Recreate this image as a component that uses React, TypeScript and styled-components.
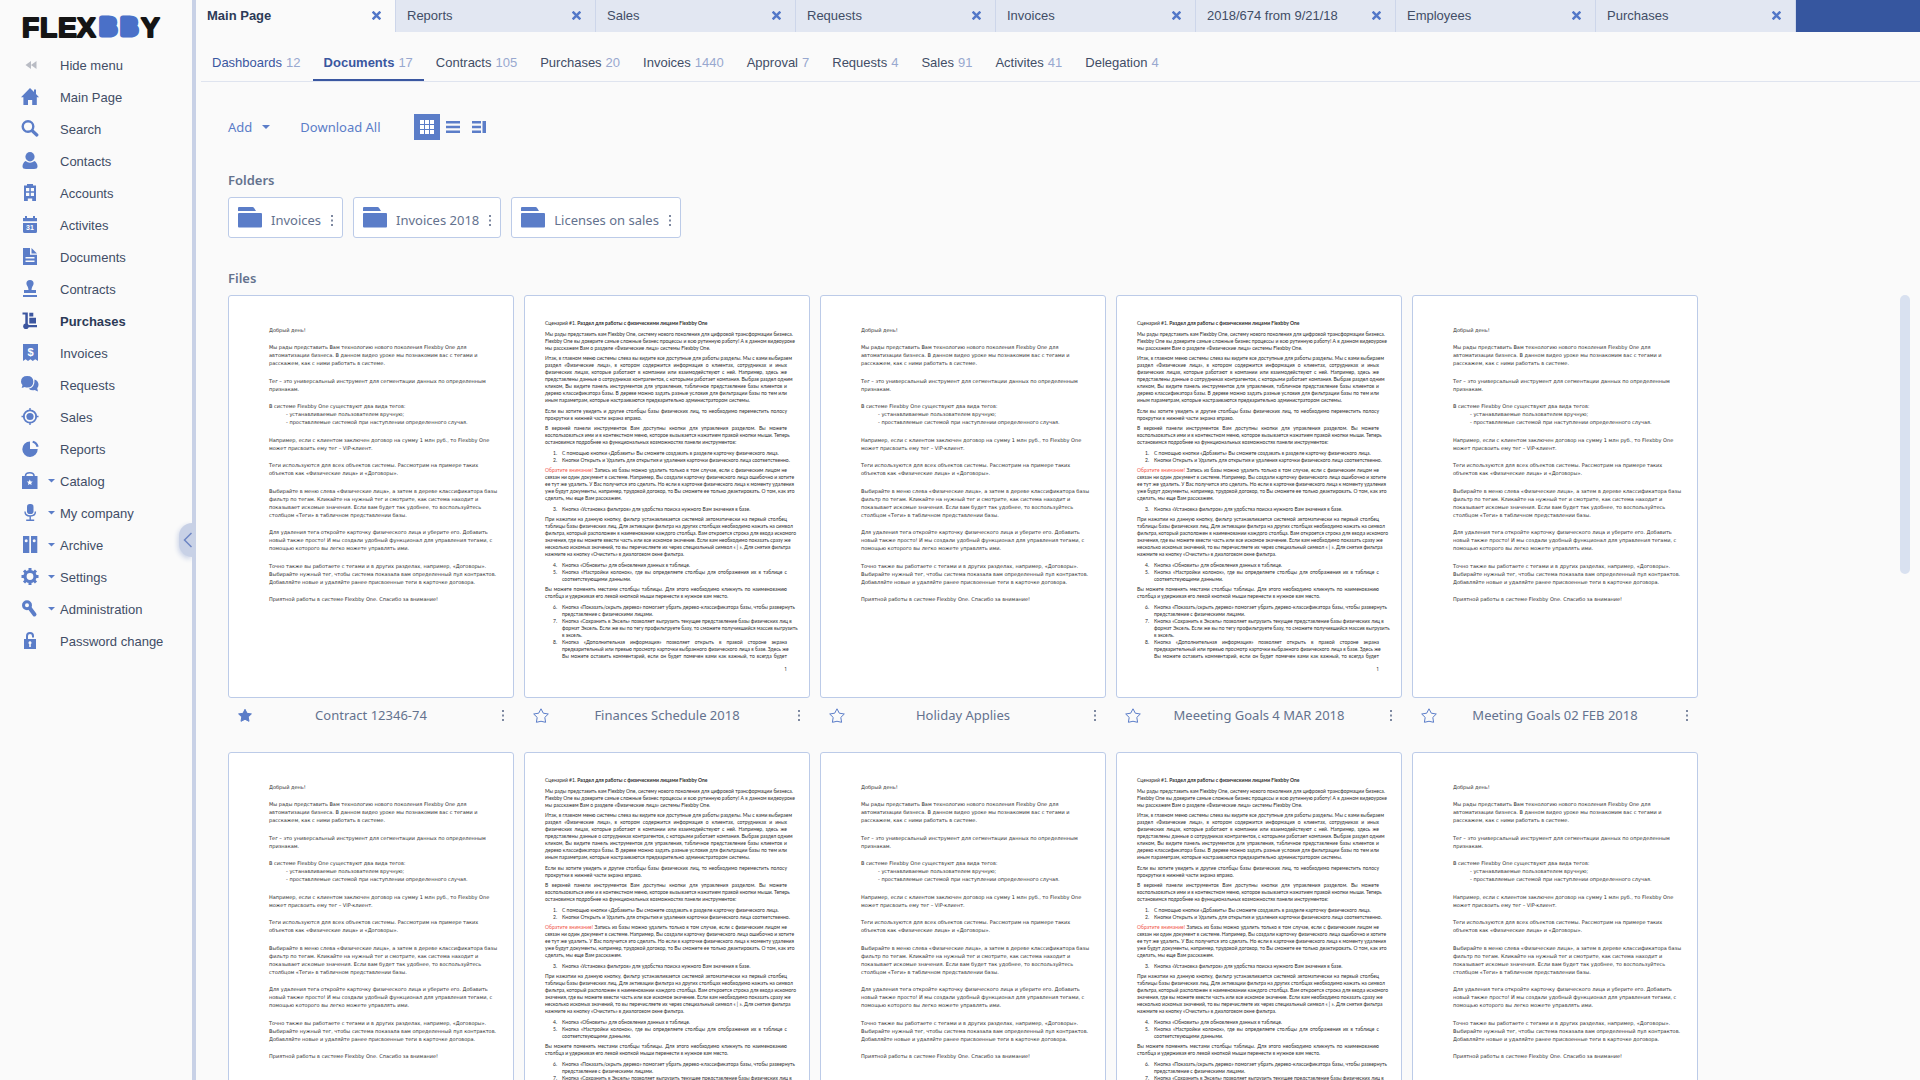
import React from "react";
import styled, { createGlobalStyle, css } from "styled-components";

const ui = `"Liberation Sans", Arial, sans-serif`;
const humanist = `"Noto Sans", "Open Sans", sans-serif`;
const blue = "#5b7dc8";

const GlobalStyle = createGlobalStyle`
  *, *::before, *::after { box-sizing: border-box; }
  body { margin: 0; background: #fafafa; font-family: ${ui}; font-size: 13px; color: #414d66; overflow: hidden; }
  button { border: 0; padding: 0; background: none; font: inherit; color: inherit; cursor: pointer; }
  a { color: inherit; text-decoration: none; }
  ul { list-style: none; margin: 0; padding: 0; }
  svg { display: block; flex: none; }
`;

const Shell = styled.div`
  display: flex;
  height: 100vh;
  overflow: hidden;
`;

const Sidebar = styled.aside`
  position: relative;
  flex: none;
  width: 196px;
  border-right: 4px solid #c8d1e6;
`;

const Logo = styled.a`
  display: block;
  height: 49px;
  padding: 10px 0 0 18px;
`;

const NavLink = styled.a<{ $active?: boolean }>`
  display: grid;
  grid-template-columns: 18px 16px 1fr;
  align-items: center;
  height: 32px;
  padding-left: 21px;
  color: #414d66;
  font-weight: ${(p) => (p.$active ? 700 : 400)};
  ${(p) => p.$active && css`color: #2c3a57;`}
`;

const NavText = styled.span`
  padding-left: 5px;
`;

const CaretCell = styled.span`
  display: flex;
  justify-content: flex-end;
`;

const Collapse = styled.button`
  position: absolute;
  right: 0;
  top: 523px;
  width: 13px;
  height: 34px;
  border-radius: 17px 0 0 17px;
  background: #c8d1e6;
  box-shadow: -1px 2px 5px #c8d1e6;
  display: flex;
  align-items: center;
  justify-content: flex-end;
`;

const Main = styled.main`
  flex: 1;
  min-width: 0;
  display: flex;
  flex-direction: column;
`;

const TabBar = styled.ul`
  display: flex;
  flex: none;
  height: 32px;
  background: #36569f;
`;

const Tab = styled.li<{ $active?: boolean }>`
  display: flex;
  align-items: center;
  justify-content: space-between;
  width: 200px;
  padding: 0 14px 1px 11px;
  border-right: 1px solid #cdd6ea;
  background: ${(p) => (p.$active ? "#fafafa" : "#e2e7f2")};
  color: ${(p) => (p.$active ? "#2c3a57" : "#414d66")};
  font-weight: ${(p) => (p.$active ? 700 : 400)};
`;

const SubNav = styled.ul`
  display: flex;
  flex: none;
  gap: 1px;
  height: 50px;
  margin-left: 5px;
  border-bottom: 1px solid #dfe4ef;
`;

const SubLink = styled.a<{ $tone?: "visited" | "active" }>`
  display: flex;
  align-items: center;
  gap: 4px;
  height: 49px;
  padding: 13px 11px 0;
  border-bottom: 2px solid ${(p) => (p.$tone === "active" ? "#3a57a0" : "transparent")};
  color: ${(p) => (p.$tone ? "#3a57a0" : "#414d66")};
  font-weight: ${(p) => (p.$tone === "active" ? 700 : 400)};
`;

const Count = styled.span`
  color: #98a8cf;
  font-weight: 400;
`;

const Content = styled.div`
  flex: 1;
  min-height: 0;
  overflow: hidden;
  padding: 32px 10px 0 32px;
  font-family: ${humanist};
  color: #64728e;
`;

const Toolbar = styled.div`
  display: flex;
  align-items: center;
  height: 26px;
  color: ${blue};
`;

const AddButton = styled.button`
  display: flex;
  align-items: center;
  gap: 10px;
  margin-right: 30px;
`;

const Views = styled.div`
  display: flex;
  margin-left: 33px;
`;

const ViewButton = styled.button<{ $active?: boolean }>`
  display: flex;
  align-items: center;
  justify-content: center;
  width: 26px;
  height: 26px;
  color: ${(p) => (p.$active ? "#fff" : blue)};
  background: ${(p) => (p.$active ? blue : "transparent")};
`;

const Section = styled.section`
  margin-top: 31px;
`;

const Heading = styled.h2`
  margin: 0 0 8px;
  font-size: 13px;
  line-height: 18px;
  font-weight: 600;
`;

const Folders = styled.ul`
  display: flex;
  gap: 10px;
`;

const Folder = styled.li`
  display: flex;
  align-items: center;
  height: 41px;
  padding: 0 8px 0 9px;
  border: 1px solid #bccbe8;
  border-radius: 3px;
  background: #fff;
`;

const FolderName = styled.a`
  padding: 5px 9px 0 9px;
`;

const MoreButton = styled.button<{ $low?: boolean }>`
  display: flex;
  justify-content: flex-end;
  color: #7d88a0;
  padding-top: ${(p) => (p.$low ? 5 : 0)}px;
`;

const FilesRow = styled.div`
  display: flex;
  align-items: flex-start;
`;

const FileGrid = styled.ul`
  flex: 1;
  display: grid;
  grid-template-columns: repeat(auto-fill, 286px);
  gap: 19px 10px;
`;

const Thumb = styled.span`
  width: 10px;
  height: 279px;
  border-radius: 5px;
  background: #d9e1f0;
`;

const Sheet = styled.div`
  height: 403px;
  border: 1px solid #bccbe8;
  border-radius: 3px;
  background: #fff;
  overflow: hidden;
  color: #2c2c2c;
  font-size: 5px;
`;

const LetterBody = styled.div`
  display: flex;
  flex-direction: column;
  justify-content: space-between;
  height: 307px;
  padding: 30px 10px 0 40px;
  font-family: "DejaVu Sans", sans-serif;
  line-height: 8px;
`;

const ManualBody = styled.div`
  display: flex;
  flex-direction: column;
  justify-content: space-between;
  height: 364px;
  padding: 24px 22px 0 20px;
  font-family: Lato, "Liberation Sans", sans-serif;
  line-height: 7px;
`;

const Paragraph = styled.div<{ $indent?: number }>`
  padding-left: ${(p) => p.$indent || 0}px;
`;

const Line = styled.div<{ $justify?: boolean }>`
  position: relative;
  white-space: nowrap;
  text-align-last: ${(p) => (p.$justify ? "justify" : "left")};
`;

const Num = styled.span`
  position: absolute;
  left: -9px;
`;

const Alert = styled.span`
  color: #f0564a;
`;

const PageNo = styled.div`
  padding: 6px 22px 0 0;
  text-align: right;
  line-height: 7px;
`;

const Caption = styled.div`
  display: grid;
  grid-template-columns: 16px 1fr 16px;
  align-items: center;
  height: 35px;
  padding: 0 9px 1px;
`;

const FileName = styled.span`
  text-align: center;
`;

const Caret = ({ size = 7 }: { size?: number }) => (
  <svg width={size} height={size / 2} viewBox="0 0 8 4" preserveAspectRatio="none" fill={blue}><path d="M0 0h8L4 4z" /></svg>
);

const Dots = () => (
  <svg width="4" height="11" viewBox="0 0 4 11" fill="currentColor">
    <path d="M1 0h2v2H1zM1 4.5h2v2H1zM1 9h2v2H1z" />
  </svg>
);

const Cross = () => (
  <svg width="9" height="9" viewBox="0 0 8 8" stroke="#5277c8" strokeWidth="2.2"><path d="M.6.6l6.8 6.8M7.4.6L.6 7.4" /></svg>
);

const Star = ({ on }: { on?: boolean }) => (
  <svg width="16" height="15" viewBox="0 0 16 15" fill={on ? blue : "none"} stroke={blue} strokeWidth="1" strokeLinejoin="round">
    <path d={on ? "M8 1.3l2 4 4.4.6-3.2 3 .8 4.4L8 11.3l-4 2 .8-4.4-3.2-3L6 5.3z" : "M8 .8l2.3 4.4 5 .8-3.5 3.4.8 4.9Q8 12.2 3.4 14.3l.8-4.9L.7 6l5-.8z"} />
  </svg>
);

const FolderIcon = () => (
  <svg width="24" height="21" viewBox="0 0 24 21" fill={blue}>
    <path d="M1 0h13.5q1 0 1.6 1L18 4H0V1q0-1 1-1z" />
    <path d="M1 6h22q1 0 1 1v12.500q0 1-1 1H1q-1 0-1-1V7q0-1 1-1z" />
  </svg>
);

const icons: Record<string, React.ReactNode> = {
  hide: <path d="M10 5v8L4.500 9zM15.500 5v8L10 9z" fill="#b9bcc4" />,
  home: <path d="M9 0l4 4V1.500h2V6l3 3.200h-2.200V17h-4.600v-5H7v5H2.400V9.200H0z" />,
  search: <g fill="none" stroke={blue} strokeLinecap="round"><circle cx="7" cy="6.500" r="5.300" strokeWidth="2.400" /><path d="M11.500 11l4.300 4" strokeWidth="3.200" /></g>,
  person: <g><ellipse cx="9" cy="4.700" rx="4.600" ry="4.700" /><path d="M4.500 9Q9 12.500 13.500 9q3 2 3 5.500 0 2.500-3.500 2.500H5q-3.500 0-3.500-2.500Q1.500 11 4.500 9z" /></g>,
  building: <path fillRule="evenodd" d="M3 1.500h3V0h6v1.500h3V17h-3.800v-2.500H6.800V17H3zM5 4v3.200h3.300V4zM9.800 4v3.200H13V4zM5 8.800V12h3.300V8.800zM9.800 8.800V12H13V8.800z" />,
  calendar: <g><path d="M2 2h2V0h2v2h6V0h2v2h2v3.200H2zM2 7h14v8.500q0 1.500-1.500 1.500h-11Q2 17 2 15.500z" /><text x="9" y="14.300" textAnchor="middle" fontSize="7" fontWeight="700" fill="#fff">31</text></g>,
  document: <path fillRule="evenodd" d="M2 0h7v6.800h7V17H2zM10.500 0L16 5.400h-5.500zM4.500 9v1.500h9V9zM4.500 12.500V14h9v-1.500z" />,
  stamp: <path d="M9 0a3.600 3.600 0 013.600 3.600C12.600 5.500 10.500 7 10.500 10H15v3H3v-3h4.500C7.500 7 5.400 5.500 5.400 3.600A3.600 3.600 0 019 0zM2 15h14v2H2z" />,
  trolley: <g fill="#3c569f"><path d="M1.500.500h5.300V13H16v2.200H7.500V15H4.300V2.500H1.500z" /><circle cx="5" cy="14.300" r="2.800" /><path d="M8.300.800h4v3.700h-4zM8.300 5.700H15v5.800H8.300z" /></g>,
  invoice: <g><path d="M2 0h15v17l-2.800-1.800-2.400 1.800-2.400-1.800L7 17l-2.400-1.800L2 17z" /><text x="9.500" y="12" textAnchor="middle" fontSize="11" fontWeight="700" fill="#fff">$</text></g>,
  chat: <g><path d="M13.500 3.500q4 1.300 4 5.300 0 2-1.300 3.400l.8 3.300-3.300-1.500q-3.500.8-6-1.300 6.300-1.200 5.800-9.200z" /><path d="M6.300 0q6 0 6 5.700t-6 5.800q-1.300 0-2.500-.5L.700 12l.8-3Q0 7.600 0 5.700 0 0 6.300 0z" /></g>,
  target: <g><circle cx="9" cy="8.500" r="6.200" fill="none" stroke={blue} strokeWidth="1.800" /><circle cx="9" cy="8.500" r="3.600" /><path d="M8.300 0h1.400v3H8.300zM8.300 14h1.400v3H8.300zM.500 7.800h3v1.400h-3zM14.500 7.800h3v1.400h-3z" /></g>,
  pie: <g><path d="M9 1.500V9h7.700A7.700 7.700 0 119 1.500z" /><path d="M11.700 1.800q4 1 4.900 5" fill="none" stroke={blue} strokeWidth="2.200" /></g>,
  bag: <g><path d="M4.500 5V4q0-3.200 4.300-3.200T13 4v1" fill="none" stroke={blue} strokeWidth="1.600" /><path d="M1 4h15.500v13H1z" /><path d="M8.800 7.500l.9 1.900 2 .2-1.500 1.400.4 2.100-1.800-1-1.800 1 .4-2.100L5.900 9.600l2-.2z" fill="#fff" /></g>,
  mic: <g><rect x="6" y="0" width="6.500" height="10" rx="2.800" /><path d="M4 7.500q0 4.500 5.200 4.500t5.200-4.500M9.200 12v3.500M5.200 16.300h8" fill="none" stroke={blue} strokeWidth="1.400" /></g>,
  binders: <path fillRule="evenodd" d="M2 0h6.300v17H2zM10 0h6.300v17H10zM5.200 3.300a1.500 1.500 0 100 3 1.500 1.500 0 000-3zM13.200 3.300a1.500 1.500 0 100 3 1.500 1.500 0 000-3z" />,
  gear: <g><circle cx="9" cy="8.500" r="5" fill="none" stroke={blue} strokeWidth="3.200" /><path d="M9 0v3M9 14v3M.500 8.500h3M14.500 8.500h3M3 2.500l2.200 2.200M12.800 12.300l2.200 2.200M15 2.500l-2.200 2.200M5.200 12.300L3 14.500" stroke={blue} strokeWidth="3" /></g>,
  key: <g fill="none" stroke={blue} strokeLinecap="round"><circle cx="6" cy="5.200" r="3.500" strokeWidth="3" /><path d="M9 8.500l4.500 6" strokeWidth="4" /></g>,
  lock: <g><path d="M6 7.500V4q0-3 3-3t3 3v1.500" fill="none" stroke={blue} strokeWidth="2" /><path fillRule="evenodd" d="M3 7h12v10H3zM9 9.300a1.500 1.500 0 00-.8 2.800V15h1.600v-2.900A1.500 1.500 0 009 9.300z" /></g>,
};

const nav: [string, string, boolean?][] = [
  ["hide", "Hide menu"],
  ["home", "Main Page"],
  ["search", "Search"],
  ["person", "Contacts"],
  ["building", "Accounts"],
  ["calendar", "Activites"],
  ["document", "Documents"],
  ["stamp", "Contracts"],
  ["trolley", "Purchases"],
  ["invoice", "Invoices"],
  ["chat", "Requests"],
  ["target", "Sales"],
  ["pie", "Reports"],
  ["bag", "Catalog", true],
  ["mic", "My company", true],
  ["binders", "Archive", true],
  ["gear", "Settings", true],
  ["key", "Administration", true],
  ["lock", "Password change"],
];

const tabs = ["Main Page", "Reports", "Sales", "Requests", "Invoices", "2018/674 from 9/21/18", "Employees", "Purchases"];

const subTabs: [string, number, ("visited" | "active")?][] = [
  ["Dashboards", 12, "visited"],
  ["Documents", 17, "active"],
  ["Contracts", 105],
  ["Purchases", 20],
  ["Invoices", 1440],
  ["Approval", 7],
  ["Requests", 4],
  ["Sales", 91],
  ["Activites", 41],
  ["Delegation", 4],
];

const letter: string[][] = [
  ["Добрый день!"],
  ["Мы рады представить Вам технологию нового поколения Flexbby One для", "автоматизации бизнеса. В данном видео уроке мы познакомим вас с тегами и", "расскажем, как с ними работать в системе."],
  ["Тег – это универсальный инструмент для сегментации данных по определенным", "признакам."],
  ["В системе Flexbby One существуют два вида тегов:", "- устанавливаемые пользователем вручную;", "- проставляемые системой при наступлении определенного случая."],
  ["Например, если с клиентом заключен договор на сумму 1 млн руб., то Flexbby One", "может присвоить ему тег – VIP-клиент."],
  ["Теги используются для всех объектов системы. Рассмотрим на примере таких", "объектов как «Физические лица» и «Договоры»."],
  ["Выбирайте в меню слева «Физические лица», а затем в дереве классификатора базы", "фильтр по тегам. Кликайте на нужный тег и смотрите, как система находит и", "показывает искомые значения. Если вам будет так удобнее, то воспользуйтесь", "столбцом «Теги» в табличном представлении базы."],
  ["Для удаления тега откройте карточку физического лица и уберите его. Добавить", "новый также просто! И мы создали удобный функционал для управления тегами, с", "помощью которого вы легко можете управлять ими."],
  ["Точно также вы работаете с тегами и в других разделах, например, «Договоры».", "Выбирайте нужный тег, чтобы система показала вам определенный пул контрактов.", "Добавляйте новые и удаляйте ранее присвоенные теги в карточке договора."],
  ["Приятной работы в системе Flexbby One. Спасибо за внимание!"],
];

type Block = { n?: number; alert?: string; title?: string; lines: string[] };
const manual: Block[][] = [
  [{ title: "Раздел для работы с физическими лицами Flexbby One", lines: ["Сценарий #1. "] }],
  [{ lines: ["Мы рады представить вам Flexbby One, систему нового поколения для цифровой трансформации бизнеса.", "Flexbby One вы доверите самые сложные бизнес процессы и всю рутинную работу! А в данном видеоуроке", "мы расскажем Вам о разделе «Физические лица» системы Flexbby One."] }],
  [{ lines: ["Итак, в главном меню системы слева вы видите все доступные для работы разделы. Мы с вами выбираем", "раздел «Физические лица», в котором содержится информация о клиентах, сотрудниках и иных", "физических лицах, которые работают в компании или взаимодействуют с ней. Например, здесь же", "представлены данные о сотрудниках контрагентов, с которыми работает компания. Выбрав раздел одним", "кликом, Вы видите панель инструментов для управления, табличное представление базы клиентов и", "дерево классификатора базы. В дереве можно задать разные условия для фильтрации базы по тем или", "иным параметрам, которые настраиваются предварительно администратором системы."] }],
  [{ lines: ["Если вы хотите увидеть и другие столбцы базы физических лиц, то необходимо переместить полосу", "прокрутки в нижней части экрана вправо."] }],
  [{ lines: ["В верхней панели инструментов Вам доступны кнопки для управления разделом. Вы можете", "воспользоваться ими и в контекстном меню, которое вызывается нажатием правой кнопки мыши. Теперь", "остановимся подробнее на функциональных возможностях панели инструментов:"] }],
  [{ n: 1, lines: ["С помощью кнопки «Добавить» Вы сможете создавать в разделе карточку физического лица."] }, { n: 2, lines: ["Кнопки Открыть и Удалить для открытия и удаления карточки физического лица соответственно."] }],
  [{ alert: "Обратите внимание!", lines: [" Запись из базы можно удалить только в том случае, если с физическим лицом не", "связан ни один документ в системе. Например, Вы создали карточку физического лица ошибочно и хотите", "ее тут же удалить. У Вас получится это сделать. Но если в карточке физического лица к моменту удаления", "уже будут документы, например, трудовой договор, то Вы сможете ее только деактировать. О том, как это", "сделать, мы еще Вам расскажем."] }],
  [{ n: 3, lines: ["Кнопка «Установка фильтров» для удобства поиска нужного Вам значения в базе."] }],
  [{ lines: ["При нажатии на данную кнопку, фильтр устанавливается системой автоматически на первый столбец", "таблицы базы физических лиц. Для активации фильтра на других столбцах необходимо нажать на символ", "фильтра, который расположен в наименовании каждого столбца. Вам откроется строка для ввода искомого", "значения, где вы можете ввести часть или все искомое значение. Если вам необходимо показать сразу же", "несколько искомых значений, то вы перечисляете их через специальный символ « | ». Для снятия фильтра", "нажмите на кнопку «Очистить» в диалоговом окне фильтра."] }],
  [{ n: 4, lines: ["Кнопка «Обновить» для обновления данных в таблице."] }, { n: 5, lines: ["Кнопка «Настройки колонок», где вы определяете столбцы для отображения их в таблице с", "соответствующими данными."] }],
  [{ lines: ["Вы можете поменять местами столбцы таблицы. Для этого необходимо кликнуть по наименованию", "столбца и удерживая его левой кнопкой мыши перенести в нужное вам место."] }],
  [
    { n: 6, lines: ["Кнопка «Показать/скрыть дерево» помогает убрать дерево-классификатора базы, чтобы развернуть", "представление с физическими лицами."] },
    { n: 7, lines: ["Кнопка «Сохранить в Эксель» позволяет выгрузить текущее представление базы физических лиц в", "формат Эксель. Если же вы по тегу профильтруете базу, то сможете получившийся массив выгрузить", "в эксель."] },
    { n: 8, lines: ["Кнопка «Дополнительная информация» позволяет открыть в правой стороне экрана", "предварительный или превью просмотр карточки выбранного физического лица в базе. Здесь же", "Вы можете оставить комментарий, если он будет помечен вами как важный, то всегда будет"] },
  ],
];

const Letter = () => (
  <Sheet>
    <LetterBody>
      {letter.map((lines, i) => (
        <Paragraph key={i}>
          {lines.map((l) => (
            <Paragraph key={l} $indent={l.startsWith("- ") ? 17 : 0}><Line>{l}</Line></Paragraph>
          ))}
        </Paragraph>
      ))}
    </LetterBody>
  </Sheet>
);

const Manual = () => (
  <Sheet>
    <ManualBody>
      {manual.map((blocks, i) => (
        <div key={i}>
          {blocks.map((b, j) => (
            <Paragraph key={j} $indent={b.n ? 17 : 0}>
              {b.lines.map((l, k) => (
                <Line key={l} $justify={k < b.lines.length - 1 || l.endsWith("всегда будет")}>
                  {b.n && k === 0 && <Num>{b.n}.</Num>}
                  {b.alert && k === 0 && <Alert>{b.alert}</Alert>}
                  {l}
                  {b.title && <b>{b.title}</b>}
                </Line>
              ))}
            </Paragraph>
          ))}
        </div>
      ))}
    </ManualBody>
    <PageNo>1</PageNo>
  </Sheet>
);

const files: { name: string; kind: "letter" | "manual"; on?: boolean }[] = [
  { name: "Contract 12346-74", kind: "letter", on: true },
  { name: "Finances Schedule 2018", kind: "manual" },
  { name: "Holiday Applies", kind: "letter" },
  { name: "Meeeting Goals 4 MAR 2018", kind: "manual" },
  { name: "Meeting Goals 02 FEB 2018", kind: "letter" },
  { name: "", kind: "letter" },
  { name: "", kind: "manual" },
  { name: "", kind: "letter" },
  { name: "", kind: "manual" },
  { name: "", kind: "letter" },
];

export default function App() {
  return (
    <Shell>
      <GlobalStyle />
      <Sidebar>
        <Logo href="#" aria-label="Flexbby">
          <svg width="150" height="38" viewBox="-4 -4 150 38" fontFamily="Liberation Sans, Arial, sans-serif" fontWeight="700" strokeLinejoin="round">
            <text x="0 18 36 55" y="23" fontSize="28" fill="#151515" stroke="#151515" strokeWidth="2">FLEX</text>
            <text x="78 99" y="21.300" fontSize="23" fill="#4a70c8" stroke="#4a70c8" strokeWidth="5">BB</text>
            <text x="119" y="23" fontSize="28" fill="#151515" stroke="#151515" strokeWidth="2">Y</text>
          </svg>
        </Logo>
        <nav aria-label="Main menu">
          {nav.map(([icon, label, caret]) => (
            <NavLink key={label} href="#" $active={label === "Purchases"}>
              <svg width="18" height="18" viewBox="0 0 18 18" fill={blue}>{icons[icon]}</svg>
              <CaretCell>{caret && <Caret />}</CaretCell>
              <NavText>{label}</NavText>
            </NavLink>
          ))}
        </nav>
        <Collapse aria-label="Collapse sidebar">
          <svg width="9" height="16" viewBox="0 0 9 16" fill="none" stroke="#6d86c4" strokeWidth="1.500"><path d="M8.500 1L1.500 8l7 7" /></svg>
        </Collapse>
      </Sidebar>
      <Main>
        <TabBar>
          {tabs.map((t, i) => (
            <Tab key={t} $active={i === 0}>
              <a href="#">{t}</a>
              <button aria-label={`Close ${t}`}><Cross /></button>
            </Tab>
          ))}
        </TabBar>
        <SubNav>
          {subTabs.map(([label, n, tone]) => (
            <li key={label}>
              <SubLink href="#" $tone={tone}>{label}<Count>{n}</Count></SubLink>
            </li>
          ))}
        </SubNav>
        <Content>
          <Toolbar>
            <AddButton>Add<Caret size={8} /></AddButton>
            <button>Download All</button>
            <Views>
              <ViewButton $active aria-label="Grid view">
                <svg width="14" height="14" viewBox="0 0 14 14" fill="currentColor"><path d="M0 0h4v4H0zM5 0h4v4H5zM10 0h4v4h-4zM0 5h4v4H0zM5 5h4v4H5zM10 5h4v4h-4zM0 10h4v4H0zM5 10h4v4H5zM10 10h4v4h-4z" /></svg>
              </ViewButton>
              <ViewButton aria-label="List view">
                <svg width="14" height="12" viewBox="0 0 14 12" fill="currentColor"><path d="M0 0h14v2.500H0zM0 4.700h14v2.500H0zM0 9.500h14V12H0z" /></svg>
              </ViewButton>
              <ViewButton aria-label="Detail view">
                <svg width="14" height="12" viewBox="0 0 14 12" fill="currentColor"><path d="M0 0h9v2.500H0zM0 4.700h9v2.500H0zM0 9.500h9V12H0zM10.500 0H14v12h-3.500z" /></svg>
              </ViewButton>
            </Views>
          </Toolbar>
          <Section>
            <Heading>Folders</Heading>
            <Folders>
              {["Invoices", "Invoices 2018", "Licenses on sales"].map((f) => (
                <Folder key={f}>
                  <FolderIcon />
                  <FolderName href="#">{f}</FolderName>
                  <MoreButton $low aria-label={`${f} options`}><Dots /></MoreButton>
                </Folder>
              ))}
            </Folders>
          </Section>
          <Section>
            <Heading>Files</Heading>
            <FilesRow>
              <FileGrid>
                {files.map((f, i) => (
                  <li key={i}>
                    {f.kind === "letter" ? <Letter /> : <Manual />}
                    {f.name && (
                      <Caption>
                        <button aria-label={`Favourite ${f.name}`} aria-pressed={!!f.on}><Star on={f.on} /></button>
                        <FileName>{f.name}</FileName>
                        <MoreButton aria-label={`${f.name} options`}><Dots /></MoreButton>
                      </Caption>
                    )}
                  </li>
                ))}
              </FileGrid>
              <Thumb />
            </FilesRow>
          </Section>
        </Content>
      </Main>
    </Shell>
  );
}
